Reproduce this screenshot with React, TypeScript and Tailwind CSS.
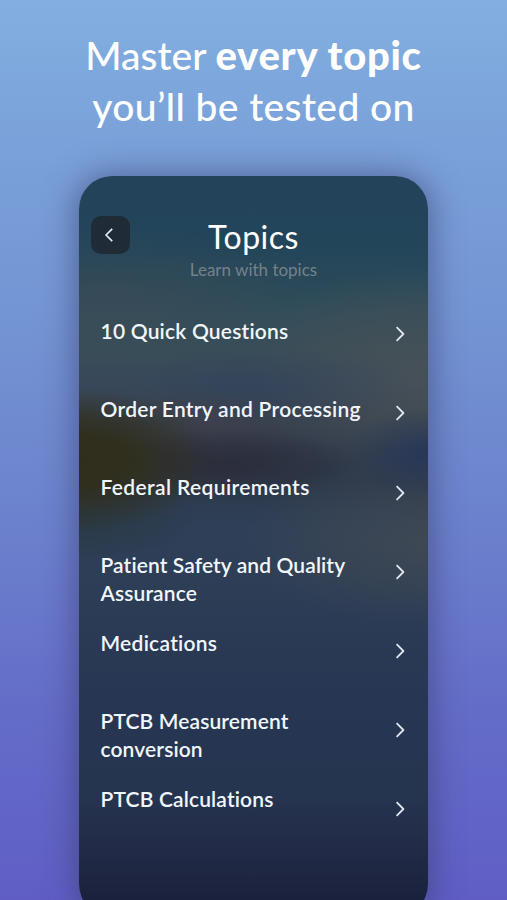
import React from "react";

const topics = [
  { title: "10 Quick Questions", spacing: "tracking-[0.2px]" },
  { title: "Order Entry and Processing", spacing: "tracking-[0.28px]" },
  { title: "Federal Requirements", spacing: "tracking-[0.37px]" },
  { title: "Patient Safety and Quality Assurance", spacing: "tracking-[0.1px]" },
  { title: "Medications", spacing: "tracking-[0.27px]" },
  { title: "PTCB Measurement conversion", spacing: "tracking-[0.12px]" },
  { title: "PTCB Calculations", spacing: "tracking-[0.15px]" },
];

const Chevron = () => {
  return <svg width="12" height="18" viewBox="0 0 12 18" fill="none" stroke="#dfe8f2" strokeWidth="1.8" strokeLinejoin="round">
    <path d="M1.6 2.2 L8.4 9 L1.6 15.8" />
  </svg>;
};

const App = () => {
  return <div className="flex h-[900px] w-[507px] flex-col items-center overflow-hidden bg-[linear-gradient(180deg,#82afe0_0%,#7ba3da_14%,#7394d3_36%,#6b7fcc_60%,#636cc8_80%,#605ec5_100%)] font-[Lato,sans-serif]">
    <h1 className="flex h-[176px] shrink-0 flex-col items-center pt-[30px] text-[39px] font-medium leading-[51px] text-white">
      <span className="whitespace-nowrap">Master <b className="text-[40px] font-black tracking-[0.7px]">every topic</b></span>
      <span className="whitespace-nowrap tracking-[0.4px]">you’ll be tested on</span>
    </h1>
    {/* the blurred photo behind the list is made of stacked gradients */}
    <main className="h-[741px] w-[349px] shrink-0 rounded-[33px] bg-[radial-gradient(140px_72px_at_0px_284px,#302e1b_0%,#302e1bee_35%,#302e1ba0_60%,#302e1b40_82%,#302e1b00_100%),radial-gradient(80px_45px_at_349px_277px,#22345acc_0%,#22345a60_50%,#22345a00_100%),radial-gradient(130px_36px_at_150px_288px,#2a2a36cc_0%,#2a2a3670_50%,#2a2a3600_100%),radial-gradient(110px_36px_at_130px_250px,#443f4a80_0%,#443f4a40_50%,#443f4a00_100%),radial-gradient(140px_42px_at_190px_212px,#2f415d80_0%,#2f415d40_50%,#2f415d00_100%),radial-gradient(180px_110px_at_340px_200px,#4a5257cc_0%,#4a525770_50%,#4a525700_100%),radial-gradient(200px_70px_at_30px_120px,#474c5360_0%,#474c5330_50%,#474c5300_100%),radial-gradient(120px_40px_at_0px_345px,#28383fcc_0%,#28383f60_50%,#28383f00_100%),radial-gradient(190px_85px_at_349px_365px,#444c53bb_0%,#444c5366_50%,#444c5300_100%),linear-gradient(180deg,#22435a_0px,#23455a_70px,#294959_105px,#324d5a_140px,#384d58_175px,#38485a_205px,#37424f_240px,#303a4b_275px,#2d394b_305px,#2e3f57_350px,#2d3e56_400px,#2b3b55_450px,#273753_520px,#25344f_620px,#222c48_665px,#1b213c_724px)] shadow-[0_2px_30px_5px_rgba(52,54,100,0.5)]">
      <header className="grid h-[126px] grid-cols-[63px_1fr_63px] pt-10">
        <button className="ml-3 flex h-[38px] w-[39px] items-center justify-center rounded-[10px] bg-[#1f2c38]">
          <svg width="10" height="16" viewBox="0 0 10 16" fill="none" stroke="#e6edf3" strokeWidth="1.7" strokeLinejoin="round" className="mr-1">
            <path d="M8.2 1.8 L2 8 L8.2 14.2" />
          </svg>
        </button>
        <div className="text-center text-white">
          <h2 className="text-[32px] leading-[42px] tracking-[0.5px]">Topics</h2>
          <p className="text-[17px] leading-6 text-[#74828a]">Learn with topics</p>
        </div>
      </header>
      <div className="flex justify-between pl-[21.5px] pr-[21px]">
        <ul className="w-[272px] text-[21px] font-semibold leading-7 text-[#f1f6fb]">
          {topics.map((topic) => (
            <li key={topic.title} className="h-[78px] pt-[14.5px]"><span className={topic.spacing}>{topic.title}</span></li>
          ))}
        </ul>
        <div>
          {topics.map((topic) => (
            <div key={topic.title} className="h-[79.2px] pt-[23.2px]"><Chevron /></div>
          ))}
        </div>
      </div>
    </main>
  </div>;
};

export default App;
